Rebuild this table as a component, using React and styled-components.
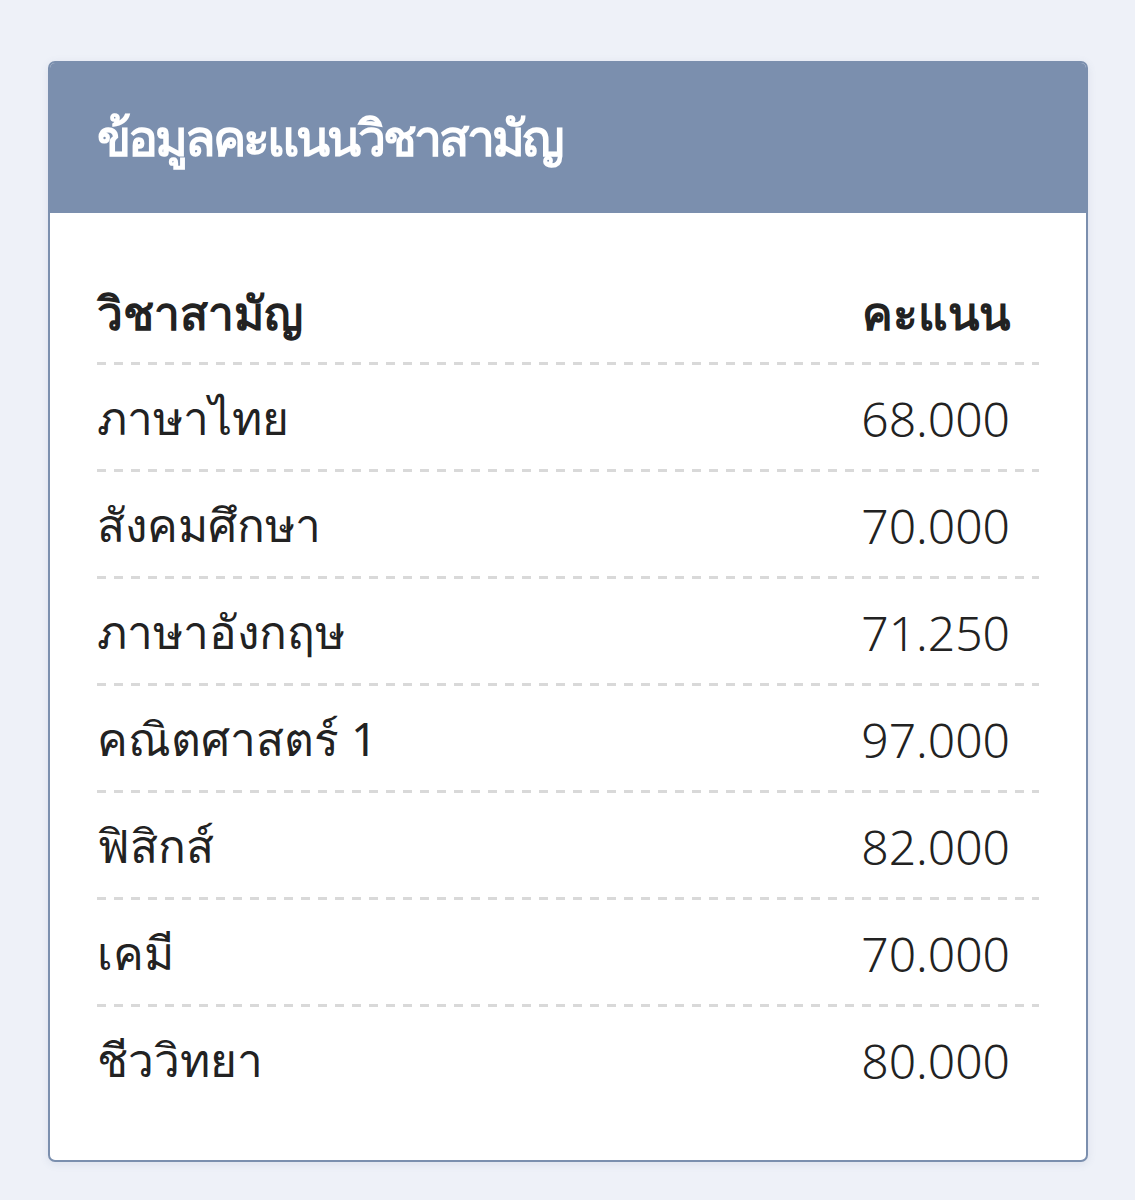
import React from "react";
import styled, { createGlobalStyle } from "styled-components";

const GlobalStyle = createGlobalStyle`
  body {
    margin: 0;
    background: #eef1f8;
    font-family: "Noto Sans", "DejaVu Sans", sans-serif;
  }
`;

const Page = styled.div`
  padding: 61px 47px 40px 48px;
`;

const Card = styled.div`
  background: #fff;
  border: 2px solid #7b8fae;
  border-radius: 7px;
  overflow: hidden;
  box-shadow: 0 2px 8px rgba(90, 110, 150, 0.12);
`;

const Header = styled.div`
  background: #7b8fae;
  height: 150px;
  display: flex;
  align-items: center;
  padding-left: 47px;
  color: #fff;
  font-size: 50px;
  font-weight: 600;
  letter-spacing: -3px;
`;

const Body = styled.div`
  padding: 48px 47px 46px 47px;
`;

const Table = styled.div`
  display: flex;
  flex-direction: column;
`;

const Row = styled.div`
  display: flex;
  justify-content: space-between;
  align-items: center;
  height: ${(p) => (p.$head ? "104px" : "107px")};
  padding-right: 29px;
  background: linear-gradient(to right, #d9d9d9 9px, transparent 9px) left bottom / 17px 3px repeat-x;
  font-size: 46px;
  font-weight: ${(p) => (p.$head ? 700 : 400)};
  color: #222;

  &:last-child {
    background: none;
  }
`;

const Subject = styled.span``;

const Score = styled.span`
  font-size: ${(p) => (p.$head ? "46px" : "48px")};
  font-weight: ${(p) => (p.$head ? 700 : 300)};
`;

const scores = [
  ["ภาษาไทย", "68.000"],
  ["สังคมศึกษา", "70.000"],
  ["ภาษาอังกฤษ", "71.250"],
  ["คณิตศาสตร์ 1", "97.000"],
  ["ฟิสิกส์", "82.000"],
  ["เคมี", "70.000"],
  ["ชีววิทยา", "80.000"],
];

export default function App() {
  return (
    <>
      <GlobalStyle />
      <Page>
        <Card>
          <Header>ข้อมูลคะแนนวิชาสามัญ</Header>
          <Body>
            <Table>
              <Row $head>
                <Subject>วิชาสามัญ</Subject>
                <Score $head>คะแนน</Score>
              </Row>
              {scores.map(([name, score]) => (
                <Row key={name}>
                  <Subject>{name}</Subject>
                  <Score>{score}</Score>
                </Row>
              ))}
            </Table>
          </Body>
        </Card>
      </Page>
    </>
  );
}
